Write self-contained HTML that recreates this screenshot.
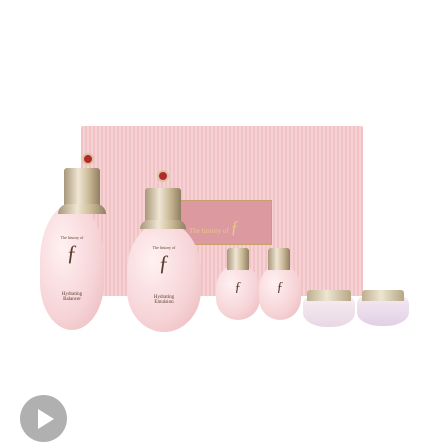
<!DOCTYPE html><html><head><style>
body{margin:0;width:438px;height:438px;background:#fff;position:relative;overflow:hidden;font-family:"Liberation Serif",serif}
div{position:absolute;box-sizing:border-box}
.box{left:81px;top:126px;width:282px;height:170px;background:repeating-linear-gradient(90deg,#f1c3c7 0 2px,#f6d2d5 2px 4px);border-radius:2px}
.card{left:180px;top:200px;width:92px;height:45px;background:#dc9aa0;border:1px solid #c9a06a;color:#e8c68a;font-size:7px;padding:16px 0 0 8px}
.cap{background:linear-gradient(90deg,#a8977a,#efe6d4 40%,#c9b894 70%,#8f7f62);border-radius:3px 3px 0 0}
.body{background:radial-gradient(ellipse at 35% 35%,#fff1f2,#f6d3d6 60%,#e9b6ba);border-radius:50%/45% 45% 38% 38%}
.t{color:#5a3a2e;text-align:center;width:100%;font-size:4px}
.logo{font-size:22px;color:#5a3a2e;text-align:center;width:100%}
.orn{background:#b32a2e;border-radius:50%;border:2px solid #d9c6a0}
.jar{background:linear-gradient(#f7eef0,#e8d7e6);border-radius:8px 8px 45% 45%}
.lid{background:linear-gradient(90deg,#bdb08f,#eee5d2 45%,#b5a784);border-radius:3px 3px 0 0}
.play{left:20px;top:395px;width:47px;height:47px;border-radius:50%;background:#b0b0b0}
.tri{left:38px;top:409px;width:0;height:0;border-left:16px solid #fff;border-top:10px solid transparent;border-bottom:10px solid transparent}
</style></head><body>
<div class="box"></div>
<div class="card">The history of <span style="font-size:18px">ƒ</span></div>
<div class="body" style="left:40px;top:204px;width:64px;height:126px"></div>
<div class="cap" style="left:64px;top:168px;width:36px;height:44px"></div>
<div class="cap" style="left:58px;top:204px;width:48px;height:10px;border-radius:10px 10px 0 0"></div>
<div class="orn" style="left:82px;top:153px;width:12px;height:12px"></div>
<div class="t" style="left:40px;top:235px;width:64px">The history of</div>
<div class="logo" style="left:40px;top:240px;width:64px">ƒ</div>
<div class="t" style="left:40px;top:292px;width:64px;font-size:5px">Hydrating<br>Balancer</div>
<div class="body" style="left:127px;top:222px;width:74px;height:110px"></div>
<div class="cap" style="left:145px;top:188px;width:36px;height:38px"></div>
<div class="cap" style="left:140px;top:220px;width:46px;height:9px;border-radius:10px 10px 0 0"></div>
<div class="orn" style="left:157px;top:170px;width:12px;height:12px"></div>
<div class="t" style="left:127px;top:245px;width:74px">The history of</div>
<div class="logo" style="left:127px;top:250px;width:74px">ƒ</div>
<div class="t" style="left:127px;top:295px;width:74px;font-size:5px">Hydrating<br>Emulsion</div>
<div class="body" style="left:216px;top:264px;width:44px;height:56px"></div>
<div class="cap" style="left:227px;top:248px;width:22px;height:22px"></div>
<div class="logo" style="left:216px;top:280px;width:44px;font-size:14px">ƒ</div>
<div class="body" style="left:259px;top:264px;width:42px;height:56px"></div>
<div class="cap" style="left:268px;top:248px;width:22px;height:22px"></div>
<div class="logo" style="left:259px;top:280px;width:42px;font-size:14px">ƒ</div>
<div class="jar" style="left:303px;top:296px;width:52px;height:31px"></div>
<div class="lid" style="left:307px;top:290px;width:44px;height:11px"></div>
<div class="jar" style="left:357px;top:296px;width:52px;height:30px;background:linear-gradient(#f4eaf2,#e2cfe6)"></div>
<div class="lid" style="left:362px;top:290px;width:42px;height:11px"></div>
<div class="play"></div><div class="tri"></div>
</body></html>
